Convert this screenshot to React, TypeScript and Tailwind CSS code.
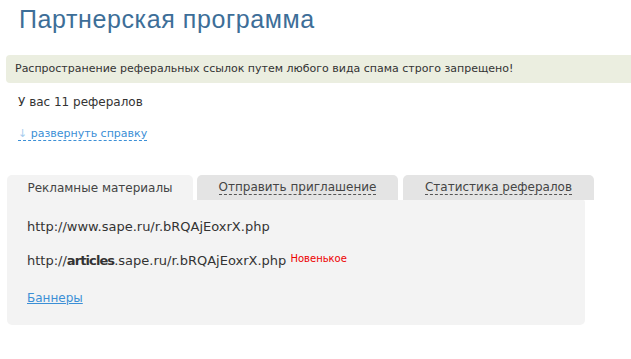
import React from 'react'

const tabs = [
  { label: 'Рекламные материалы', active: true, width: 'w-[186px]' },
  { label: 'Отправить приглашение', active: false, width: 'w-[201px]' },
  { label: 'Статистика рефералов', active: false, width: 'w-[191px]' },
]

export default function App() {
  return (
    <div className="w-[631px] h-[359px] overflow-hidden bg-white font-['DejaVu_Sans',sans-serif] text-[#333]">
      <h1 className="pl-[19px] pt-[4px] text-[25px] leading-[30px] text-[#3d6e98] font-['Liberation_Sans',sans-serif] tracking-[0.6px]">
        Партнерская программа
      </h1>

      <div className="mt-[21px] ml-[6px] h-[28px] flex items-center pl-[9px] bg-[#ebeee0] rounded-l-[4px] text-[11px] text-[#333]">
        Распространение реферальных ссылок путем любого вида спама строго запрещено!
      </div>

      <p className="mt-[11px] pl-[18px] text-[12px] leading-[16px] text-[#333]">У вас 11 рефералов</p>

      <div className="mt-[17px] pl-[18px] text-[11px] leading-[14px]">
        <span className="text-[#3b8fd6] border-b border-dashed border-[#3b8fd6]">
          <span className="text-[#a9cdee]">↓</span> развернуть справку
        </span>
      </div>

      <div className="mt-[34px] ml-[7px]">
        <div className="flex items-end">
          {tabs.map((t, i) => (
            <div
              key={t.label}
              className={`${t.width} h-[25px] flex items-center justify-center rounded-t-[5px] text-[12px] ${
                t.active ? 'bg-[#f3f3f3] text-[#444]' : 'bg-[#e4e4e4] text-[#444]'
              } ${i === 1 ? 'ml-[4px]' : ''} ${i === 2 ? 'ml-[5px]' : ''}`}
            >
              <span className={t.active ? '' : 'border-b border-dashed border-[#555] leading-[14px]'}>{t.label}</span>
            </div>
          ))}
        </div>
        <div className="w-[578px] h-[125px] bg-[#f3f3f3] rounded-b-[5px] rounded-tr-[2px] pl-[20px] pt-[19px] text-[13px] text-[#333] font-['DejaVu_Sans',sans-serif]">
          <p className="leading-[16px]">http://www.sape.ru/r.bRQAjEoxrX.php</p>
          <p className="mt-[18px] leading-[16px]">
            http://<b className="tracking-[-0.9px]">articles</b>.sape.ru/r.bRQAjEoxrX.php{' '}
            <sup className="text-[10px] text-[#ee0000] relative -top-[3px]">Новенькое</sup>
          </p>
          <p className="mt-[21px] leading-[16px] text-[12px]">
            <a className="text-[#3b8fd6] underline">Баннеры</a>
          </p>
        </div>
      </div>
    </div>
  )
}
